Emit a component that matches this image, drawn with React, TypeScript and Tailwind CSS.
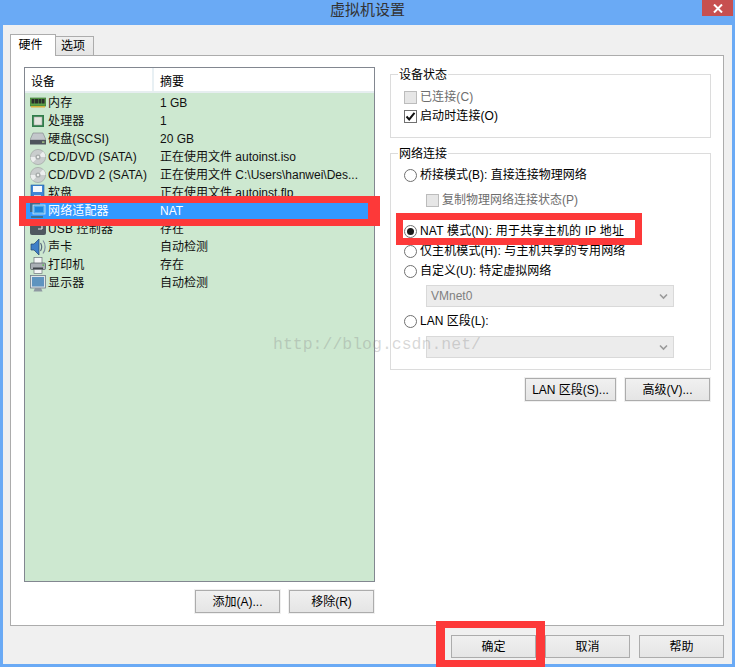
import type { ReactNode } from 'react'

const font = "font-['Liberation_Sans','Noto_Sans_CJK_SC',sans-serif]"

function MemoryIcon() {
  return (
    <svg width="16" height="16" viewBox="0 0 16 16">
      <rect x="0" y="3" width="16" height="8" fill="#5da24a" stroke="#2f6a2a" strokeWidth="0.6" />
      <rect x="1.5" y="4" width="3" height="4.5" fill="#2a2f2a" />
      <rect x="5" y="4" width="3" height="4.5" fill="#2a2f2a" />
      <rect x="8.5" y="4" width="3" height="4.5" fill="#2a2f2a" />
      <rect x="12" y="4" width="2.6" height="4.5" fill="#2a2f2a" />
      <path d="M1 11h14v1.5H1z" fill="#d6b13c" />
    </svg>
  )
}

function CpuIcon() {
  return (
    <svg width="16" height="16" viewBox="0 0 16 16">
      <rect x="2" y="2" width="12" height="12" fill="#2f7d4a" />
      <rect x="4" y="4" width="8" height="8" fill="#e4e6e0" stroke="#a8aca4" strokeWidth="0.6" />
    </svg>
  )
}

function DiskIcon() {
  return (
    <svg width="16" height="16" viewBox="0 0 16 16">
      <path d="M3 2h10l3 7H0z" fill="#c3c7cb" stroke="#7c8288" strokeWidth="0.6" />
      <rect x="0" y="9" width="16" height="4.5" fill="#4e555c" />
      <rect x="12" y="10.5" width="2.5" height="1.2" fill="#b8e08a" />
    </svg>
  )
}

function CdIcon() {
  return (
    <svg width="16" height="16" viewBox="0 0 16 16">
      <circle cx="8" cy="8" r="7.6" fill="#c9cdcd" stroke="#9a9e9e" strokeWidth="0.6" />
      <path d="M8 8 13 2.5A7.5 7.5 0 0 1 15.5 8z" fill="#eceeee" />
      <path d="M8 8 3 13.5A7.5 7.5 0 0 1 .5 8z" fill="#eceeee" />
      <circle cx="8" cy="8" r="2.6" fill="#a6aaaa" />
      <circle cx="8" cy="8" r="1.2" fill="#eef0ee" />
    </svg>
  )
}

function FloppyIcon() {
  return (
    <svg width="16" height="18" viewBox="0 0 16 18">
      <rect x="1" y="1" width="13" height="16" fill="#3f86d6" stroke="#24609f" strokeWidth="0.6" />
      <rect x="3" y="2" width="9" height="6" fill="#f4f8fc" />
      <rect x="4" y="11" width="7" height="6" fill="#c7d4e0" />
    </svg>
  )
}

function NetworkIcon() {
  return (
    <svg width="16" height="16" viewBox="0 0 16 16">
      <rect x="0" y="0" width="10" height="9" fill="#3b6f93" />
      <rect x="3" y="2" width="12" height="9" fill="#4aa7ea" stroke="#d7e8f6" strokeWidth="0.8" />
      <rect x="5" y="4" width="8" height="5" fill="#1f86dc" />
      <path d="M1 13h12v2H1z" fill="#3b6f93" />
    </svg>
  )
}

function UsbIcon() {
  return (
    <svg width="16" height="16" viewBox="0 0 16 16">
      <rect x="0" y="0" width="16" height="14" rx="2" fill="#4f5960" />
      <path d="M7 4h5M12 4v4M12 8H8" stroke="#e6eaec" strokeWidth="1.2" fill="none" />
    </svg>
  )
}

function SoundIcon() {
  return (
    <svg width="16" height="18" viewBox="0 0 16 18">
      <path d="M1 6h3l5-5v16l-5-5H1z" fill="#3f7fc8" stroke="#22456f" strokeWidth="0.7" />
      <path d="M10.5 5c1.5 2.5 1.5 5.500 0 8" stroke="#5a6a7c" strokeWidth="1.2" fill="none" />
      <path d="M13 2.500c2.800 3.500 2.800 9.500 0 13" stroke="#7f8e9e" strokeWidth="1.2" fill="none" />
    </svg>
  )
}

function PrinterIcon() {
  return (
    <svg width="16" height="17" viewBox="0 0 16 17">
      <rect x="4" y="0.5" width="8" height="6" fill="#f4f6f6" stroke="#6c7278" strokeWidth="0.7" />
      <rect x="0.5" y="6" width="15" height="6.500" rx="1" fill="#a9afb5" stroke="#4f565c" strokeWidth="0.7" />
      <rect x="12.4" y="7.4" width="1.6" height="1.4" fill="#55c04a" />
      <rect x="3" y="10.500" width="10" height="1.800" fill="#3f454a" />
      <rect x="4" y="12.500" width="8" height="4" fill="#f4f6f6" stroke="#6c7278" strokeWidth="0.7" />
    </svg>
  )
}

function MonitorIcon() {
  return (
    <svg width="16" height="17" viewBox="0 0 16 17">
      <rect x="0.5" y="0.5" width="15" height="12.500" fill="#dfe4e8" stroke="#6f7c88" strokeWidth="0.8" />
      <rect x="2" y="2" width="12" height="9.500" fill="#5f94bf" />
      <path d="M5 13h6l1.500 3.500h-9z" fill="#8f99a2" />
    </svg>
  )
}

const devices: { icon: ReactNode; name: string; summary: string; selected?: boolean }[] = [
  { icon: <MemoryIcon />, name: '内存', summary: '1 GB' },
  { icon: <CpuIcon />, name: '处理器', summary: '1' },
  { icon: <DiskIcon />, name: '硬盘(SCSI)', summary: '20 GB' },
  { icon: <CdIcon />, name: 'CD/DVD (SATA)', summary: '正在使用文件 autoinst.iso' },
  { icon: <CdIcon />, name: 'CD/DVD 2 (SATA)', summary: '正在使用文件 C:\\Users\\hanwei\\Des...' },
  { icon: <FloppyIcon />, name: '软盘', summary: '正在使用文件 autoinst.flp' },
  { icon: <NetworkIcon />, name: '网络适配器', summary: 'NAT', selected: true },
  { icon: <UsbIcon />, name: 'USB 控制器', summary: '存在' },
  { icon: <SoundIcon />, name: '声卡', summary: '自动检测' },
  { icon: <PrinterIcon />, name: '打印机', summary: '存在' },
  { icon: <MonitorIcon />, name: '显示器', summary: '自动检测' },
]

function Btn({ children, className = '' }: { children: ReactNode; className?: string }) {
  return (
    <div
      className={`flex h-[23px] w-[85px] items-center justify-center border border-[#acacac] bg-gradient-to-b from-[#f0f0f0] to-[#e5e5e5] text-[12px] text-black shadow-[0_0_0_1px_#f0f0f0] ${className}`}
    >
      {children}
    </div>
  )
}

function Check({ checked, disabled }: { checked?: boolean; disabled?: boolean }) {
  return (
    <span
      className={`flex h-[13px] w-[13px] shrink-0 items-center justify-center border ${
        disabled ? 'border-[#bcbcbc] bg-[#e6e6e6]' : 'border-[#707070] bg-white'
      }`}
    >
      {checked && (
        <svg width="11" height="11" viewBox="0 0 11 11">
          <path d="M1.500 5.500 4.200 8.400 9.500 1.800" stroke="#111" strokeWidth="2" fill="none" />
        </svg>
      )}
    </span>
  )
}

function Radio({ checked }: { checked?: boolean }) {
  return (
    <span className="flex h-[13px] w-[13px] shrink-0 items-center justify-center rounded-full border border-[#707070] bg-white">
      {checked && <span className="h-[7px] w-[7px] rounded-full bg-[#1a1a1a]" />}
    </span>
  )
}

function Select({ value }: { value?: string }) {
  return (
    <div className="ml-[22px] flex h-[22px] w-[248px] items-center justify-between border border-[#d9d9d9] bg-[#ececec] pl-[4px] pr-[5px] text-[12px] text-[#808080]">
      <span>{value}</span>
      <svg width="9" height="7" viewBox="0 0 9 7">
        <path d="M1 1.500 4.500 5 8 1.500" stroke="#9a9a9a" strokeWidth="1.600" fill="none" />
      </svg>
    </div>
  )
}

function Option({ children, checked, className = '' }: { children: ReactNode; checked?: boolean; className?: string }) {
  return (
    <div className={`flex h-[18px] items-center gap-[3px] text-[12px] text-black ${className}`}>
      <Radio checked={checked} />
      <span>{children}</span>
    </div>
  )
}

function DeviceList() {
  return (
    <div className="h-[515px] border border-[#828790] bg-[#cde8d0]">
      <div className="flex h-[25px] border-b-2 border-[#e6eef0] bg-white text-[12px] text-black">
        <div className="w-[129px] border-r-2 border-[#e8f0f4] pl-[6px] pt-[2px] leading-[24px]">设备</div>
        <div className="flex-1 pl-[6px] pt-[2px] leading-[24px]">摘要</div>
      </div>
      <div className="mt-[1px]">
        {devices.map((d) => (
          <div
            key={d.name}
            className={`flex h-[18px] items-center text-[12px] ${d.selected ? 'bg-[#3399ff] text-white' : 'text-[#111]'}`}
          >
            <span className="ml-[5px] flex w-[18px] shrink-0 items-center">{d.icon}</span>
            <div
              className={`flex h-full flex-1 items-center ${d.selected ? 'border-b border-dotted border-[#e8b060]' : ''}`}
            >
              <span className="w-[112px] shrink-0 whitespace-nowrap tracking-[0.15px]">{d.name}</span>
              <span className="whitespace-nowrap">{d.summary}</span>
            </div>
          </div>
        ))}
      </div>
    </div>
  )
}

function RightColumn() {
  return (
    <div className="w-[321px] text-[12px]">
      <fieldset className="h-[71px] border border-[#dcdcdc] pl-[13px]">
        <legend className="-ml-[6px] translate-y-px px-[1px] leading-[15px] text-black">设备状态</legend>
        <div className="mt-[7px] flex h-[16px] items-center gap-[3px] text-[#6d6d6d]">
          <Check disabled />
          <span className="tracking-[0.1px]">已连接(C)</span>
        </div>
        <div className="mt-[3px] flex h-[16px] items-center gap-[3px] text-black">
          <Check checked />
          <span className="tracking-[0.1px]">启动时连接(O)</span>
        </div>
      </fieldset>

      <fieldset className="mt-[8px] h-[224px] border border-[#dcdcdc] pl-[13px]">
        <legend className="-ml-[6px] translate-y-px px-[1px] leading-[15px] text-black">网络连接</legend>
        <Option className="mt-[5px]">桥接模式(B): 直接连接物理网络</Option>
        <div className="ml-[22px] mt-[7px] flex h-[18px] items-center gap-[3px] text-[#6d6d6d]">
          <Check disabled />
          <span>复制物理网络连接状态(P)</span>
        </div>
        <Option checked className="mt-[13px] tracking-[0.2px]">
          NAT 模式(N): 用于共享主机的 IP 地址
        </Option>
        <Option className="mt-[2px] tracking-[0.1px]">仅主机模式(H): 与主机共享的专用网络</Option>
        <Option className="mt-[2px]">自定义(U): 特定虚拟网络</Option>
        <div className="mt-[5px]">
          <Select value="VMnet0" />
        </div>
        <Option className="mt-[5px]">LAN 区段(L):</Option>
        <div className="mt-[6px]">
          <Select />
        </div>
      </fieldset>

      <div className="mt-[8px] flex justify-end gap-[9px] pr-px">
        <Btn className="w-[91px]">LAN 区段(S)...</Btn>
        <Btn>高级(V)...</Btn>
      </div>
    </div>
  )
}

export default function App() {
  return (
    <div className={`relative h-[667px] w-[735px] overflow-hidden bg-[#6aaaf5] ${font}`}>
      {/* title bar */}
      <div className="relative flex h-[21px] items-center justify-center text-[15px] text-[#333]">
        虚拟机设置
        <div className="absolute right-[2px] top-0 flex h-[16px] w-[31px] items-center justify-center bg-[#c75050]">
          <svg width="10" height="9" viewBox="0 0 10 9">
            <path d="M1 .5 9 8.500M9 .5 1 8.500" stroke="#fff" strokeWidth="2" />
          </svg>
        </div>
      </div>

      {/* client area */}
      <div className="mx-[3px] mt-[4px] h-[639px] bg-[#f0f0f0] px-[7px] pt-[8px]">
        <div className="flex h-[22px] items-end text-[12px] text-black">
          <div className="relative z-10 -mb-px flex h-[22px] w-[46px] items-center justify-center border border-b-0 border-[#acacac] bg-white pb-[2px] pr-[5px]">
            硬件
          </div>
          <div className="flex h-[19px] w-[38px] items-center justify-center border border-b-0 border-l-0 border-[#acacac] bg-gradient-to-b from-[#f0f0f0] to-[#e5e5e5] pr-[3px]">
            选项
          </div>
        </div>
        <div className="flex h-[571px] w-[714px] gap-[15px] border border-[#acacac] bg-white pl-[13px] pt-[11px]">
          <div className="w-[351px]">
            <DeviceList />
            <div className="mt-[8px] flex justify-end gap-[9px] pr-px text-[12px]">
              <Btn>添加(A)...</Btn>
              <Btn>移除(R)</Btn>
            </div>
          </div>
          <RightColumn />
        </div>
        <div className="mt-[9px] flex justify-end gap-[9px] pr-px">
          <Btn className="border-[#3c9cf0]">确定</Btn>
          <Btn>取消</Btn>
          <Btn>帮助</Btn>
        </div>
      </div>

      {/* red annotation boxes and watermark drawn over the screenshot */}
      <div className="absolute left-[19px] top-[196px] h-[30px] w-[361px] border-y-[7px] border-l-[7px] border-r-[12px] border-[#fd3939]" />
      <div className="absolute left-[396px] top-[213px] h-[32px] w-[246px] border-[7px] border-[#fd3939]" />
      <div className="absolute left-[436px] top-[621px] h-[46px] w-[109px] border-x-[9px] border-y-[7px] border-[#fd3939]" />
      <div className="absolute left-[273px] top-[333px] font-['Liberation_Mono',monospace] text-[16.5px] text-[#8c8c8c]/35">
        http://blog.csdn.net/
      </div>
    </div>
  )
}
